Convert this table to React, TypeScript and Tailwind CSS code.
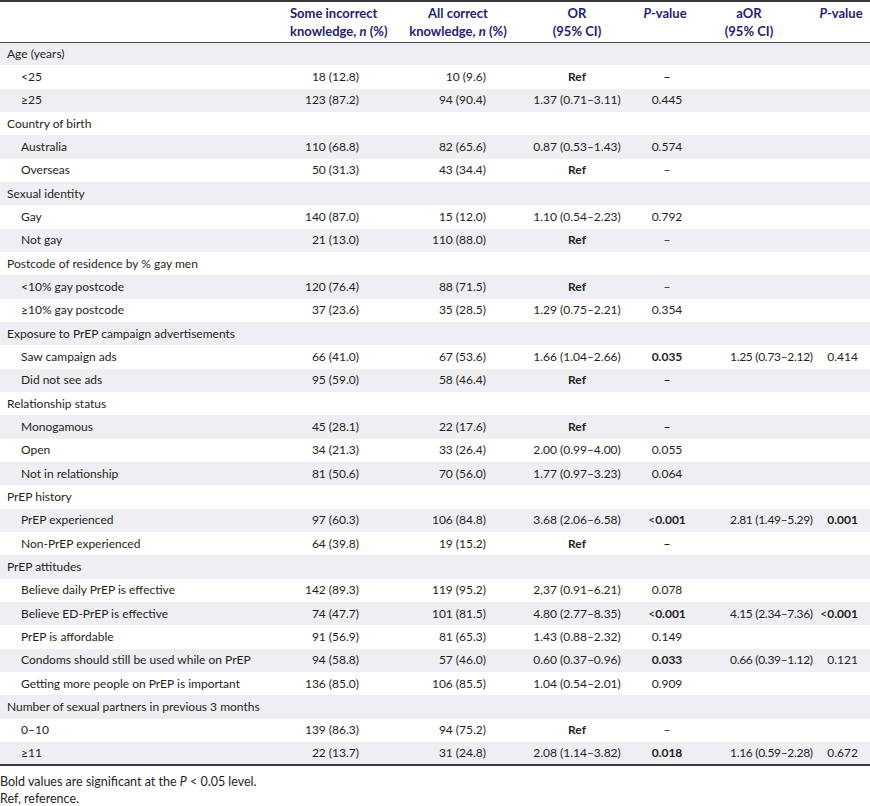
type Cell = { t: string; b?: boolean; lt?: boolean };

type Row = {
  label: string;
  sub?: boolean;
  c1?: string;
  c2?: string;
  or?: Cell;
  p?: Cell;
  aor?: string;
  p2?: Cell;
};

const rows: Row[] = [
  { label: "Age (years)" },
  { label: "<25", sub: true, c1: "18 (12.8)", c2: "10 (9.6)", or: { t: "Ref", b: true }, p: { t: "–", b: true } },
  { label: "≥25", sub: true, c1: "123 (87.2)", c2: "94 (90.4)", or: { t: "1.37 (0.71–3.11)" }, p: { t: "0.445" } },
  { label: "Country of birth" },
  { label: "Australia", sub: true, c1: "110 (68.8)", c2: "82 (65.6)", or: { t: "0.87 (0.53–1.43)" }, p: { t: "0.574" } },
  { label: "Overseas", sub: true, c1: "50 (31.3)", c2: "43 (34.4)", or: { t: "Ref", b: true }, p: { t: "–" } },
  { label: "Sexual identity" },
  { label: "Gay", sub: true, c1: "140 (87.0)", c2: "15 (12.0)", or: { t: "1.10 (0.54–2.23)" }, p: { t: "0.792" } },
  { label: "Not gay", sub: true, c1: "21 (13.0)", c2: "110 (88.0)", or: { t: "Ref", b: true }, p: { t: "–" } },
  { label: "Postcode of residence by % gay men" },
  { label: "<10% gay postcode", sub: true, c1: "120 (76.4)", c2: "88 (71.5)", or: { t: "Ref", b: true }, p: { t: "–" } },
  { label: "≥10% gay postcode", sub: true, c1: "37 (23.6)", c2: "35 (28.5)", or: { t: "1.29 (0.75–2.21)" }, p: { t: "0.354" } },
  { label: "Exposure to PrEP campaign advertisements" },
  {
    label: "Saw campaign ads", sub: true, c1: "66 (41.0)", c2: "67 (53.6)", or: { t: "1.66 (1.04–2.66)" },
    p: { t: "0.035", b: true }, aor: "1.25 (0.73–2.12)", p2: { t: "0.414" },
  },
  { label: "Did not see ads", sub: true, c1: "95 (59.0)", c2: "58 (46.4)", or: { t: "Ref", b: true }, p: { t: "–", b: true } },
  { label: "Relationship status" },
  { label: "Monogamous", sub: true, c1: "45 (28.1)", c2: "22 (17.6)", or: { t: "Ref", b: true }, p: { t: "–", b: true } },
  { label: "Open", sub: true, c1: "34 (21.3)", c2: "33 (26.4)", or: { t: "2.00 (0.99–4.00)" }, p: { t: "0.055" } },
  { label: "Not in relationship", sub: true, c1: "81 (50.6)", c2: "70 (56.0)", or: { t: "1.77 (0.97–3.23)" }, p: { t: "0.064" } },
  { label: "PrEP history" },
  {
    label: "PrEP experienced", sub: true, c1: "97 (60.3)", c2: "106 (84.8)", or: { t: "3.68 (2.06–6.58)" },
    p: { t: "0.001", b: true, lt: true }, aor: "2.81 (1.49–5.29)", p2: { t: "0.001", b: true },
  },
  { label: "Non-PrEP experienced", sub: true, c1: "64 (39.8)", c2: "19 (15.2)", or: { t: "Ref", b: true }, p: { t: "–", b: true } },
  { label: "PrEP attitudes" },
  { label: "Believe daily PrEP is effective", sub: true, c1: "142 (89.3)", c2: "119 (95.2)", or: { t: "2,37 (0.91–6.21)" }, p: { t: "0.078" } },
  {
    label: "Believe ED-PrEP is effective", sub: true, c1: "74 (47.7)", c2: "101 (81.5)", or: { t: "4.80 (2.77–8.35)" },
    p: { t: "0.001", b: true, lt: true }, aor: "4.15 (2.34–7.36)", p2: { t: "0.001", b: true, lt: true },
  },
  { label: "PrEP is affordable", sub: true, c1: "91 (56.9)", c2: "81 (65.3)", or: { t: "1.43 (0.88–2.32)" }, p: { t: "0.149" } },
  {
    label: "Condoms should still be used while on PrEP", sub: true, c1: "94 (58.8)", c2: "57 (46.0)",
    or: { t: "0.60 (0.37–0.96)" }, p: { t: "0.033", b: true }, aor: "0.66 (0.39–1.12)", p2: { t: "0.121" },
  },
  { label: "Getting more people on PrEP is important", sub: true, c1: "136 (85.0)", c2: "106 (85.5)", or: { t: "1.04 (0.54–2.01)" }, p: { t: "0.909" } },
  { label: "Number of sexual partners in previous 3 months" },
  { label: "0–10", sub: true, c1: "139 (86.3)", c2: "94 (75.2)", or: { t: "Ref", b: true }, p: { t: "–" } },
  {
    label: "≥11", sub: true, c1: "22 (13.7)", c2: "31 (24.8)", or: { t: "2.08 (1.14–3.82)" },
    p: { t: "0.018", b: true }, aor: "1.16 (0.59–2.28)", p2: { t: "0.672" },
  },
];

function Val({ c }: { c?: Cell }) {
  if (!c) return null;
  return (
    <>
      {c.lt && <span className="font-normal">&lt;</span>}
      <span className={c.b ? "font-bold" : ""}>{c.t}</span>
    </>
  );
}

export default function App() {
  return (
    <div className="w-[870px] bg-white text-[#231f20] font-['Lato','Liberation_Sans',sans-serif] text-[12px]">
      <table className="w-[870px] table-fixed border-collapse">
        <colgroup>
          <col className="w-[290px]" />
          <col className="w-[110px]" />
          <col className="w-[116px]" />
          <col className="w-[122px]" />
          <col className="w-[54px]" />
          <col className="w-[120px]" />
          <col className="w-[58px]" />
        </colgroup>
        <thead>
          <tr className="h-[41px] border-t-2 border-b border-t-[#3a3a3a] border-b-[#4a4a4a] align-middle whitespace-nowrap text-[13px] leading-[18px] text-[#1f1d74]">
            <th />
            <th className="pr-[26px] text-center font-bold">
              Some incorrect
              <br />
              knowledge, <i>n</i> (%)
            </th>
            <th className="text-center font-bold">
              All correct
              <br />
              knowledge, <i>n</i> (%)
            </th>
            <th className="text-center font-bold">
              OR
              <br />
              (95% CI)
            </th>
            <th className="pb-[18px] text-center font-bold">
              <i>P</i>-value
            </th>
            <th className="pr-[6px] text-center font-bold">
              aOR
              <br />
              (95% CI)
            </th>
            <th className="pb-[18px] text-center font-bold">
              <i>P</i>-value
            </th>
          </tr>
        </thead>
        <tbody className="border-b-2 border-b-[#3a3a3a]">
          {rows.map((r, i) => (
            <tr key={i} className={`h-[23.33px] whitespace-nowrap ${i % 2 === 0 ? "bg-[#eeeef3]" : "bg-white"}`}>
              <td className={r.sub ? "pl-[21px]" : "pl-[7px]"}>{r.label}</td>
              <td className="pr-[41px] text-right">{r.c1}</td>
              <td className="pr-[30px] text-right">{r.c2}</td>
              <td className="text-center">
                <Val c={r.or} />
              </td>
              <td className="pl-[4px] text-center">
                <Val c={r.p} />
              </td>
              <td className="pl-[38px] text-left tracking-[-0.3px]">{r.aor}</td>
              <td className="pr-[12px] text-right">
                <Val c={r.p2} />
              </td>
            </tr>
          ))}
        </tbody>
      </table>
      <div className="pt-[8px] text-[12.5px] leading-[16.5px]">
        <p>
          Bold values are significant at the <i>P</i> &lt; 0.05 level.
        </p>
        <p>Ref, reference.</p>
      </div>
    </div>
  );
}
